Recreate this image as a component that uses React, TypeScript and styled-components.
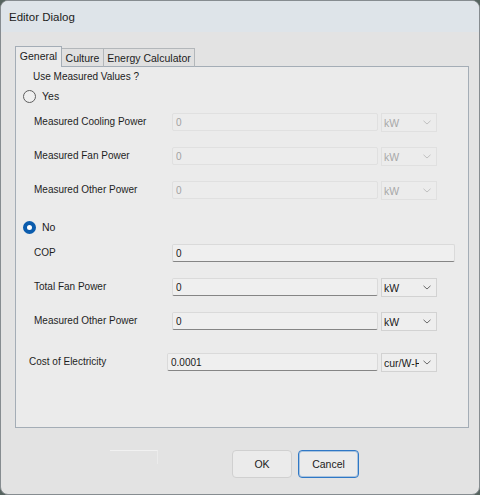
import { FC } from "react";
import styled, { createGlobalStyle } from "styled-components";

const GlobalStyle = createGlobalStyle`
  html, body {
    margin: 0;
    padding: 0;
    background: #56645f;
  }
  * {
    box-sizing: border-box;
  }
`;

const WindowStyled = styled.div`
  width: 480px;
  height: 495px;
  display: flex;
  flex-direction: column;
  border: 1px solid #868c90;
  border-radius: 8px;
  overflow: hidden;
  background: #e3e3e3;
  font-family: "Liberation Sans", Arial, sans-serif;
  color: #1c1c1c;
`;

const TitleBarStyled = styled.div`
  height: 31px;
  flex-shrink: 0;
  display: flex;
  align-items: center;
  padding-left: 8px;
  font-size: 11.5px;
  background: #dee4e9;
`;

const BodyStyled = styled.div`
  flex: 1;
  display: flex;
  flex-direction: column;
  padding: 14px 9px 0 14px;
`;

const TabStripStyled = styled.div`
  display: flex;
  align-items: flex-end;
  height: 21px;
  margin-bottom: -1px;
`;

const TabStyled = styled.div<{ $active?: boolean; $width: number }>`
  position: relative;
  z-index: ${(p) => (p.$active ? 2 : 1)};
  width: ${(p) => p.$width}px;
  height: ${(p) => (p.$active ? 21 : 19)}px;
  display: flex;
  align-items: center;
  justify-content: center;
  font-size: 10.5px;
  background: ${(p) => (p.$active ? "#ebebeb" : "#e0e0e0")};
  border: 1px solid ${(p) => (p.$active ? "#a4adb6" : "#b3b7ba")};
  border-bottom: ${(p) => (p.$active ? "none" : "1px solid #a4adb6")};
  border-left-width: ${(p) => (p.$active ? 1 : 0)}px;
  padding-bottom: ${(p) => (p.$active ? 2 : 0)}px;
`;

const PanelStyled = styled.div`
  width: 454px;
  height: 362px;
  border: 1px solid #a4adb6;
  background: #ebebeb;
  padding-top: 3px;
  display: flex;
  flex-direction: column;
`;

const GroupTitleStyled = styled.div`
  padding-left: 17px;
  height: 14px;
  line-height: 14px;
  font-size: 10px;
`;

const RadioRowStyled = styled.div<{ $gap: number }>`
  display: flex;
  align-items: center;
  gap: 6px;
  height: 14px;
  margin-top: ${(p) => p.$gap}px;
  padding-left: 7px;
  font-size: 10.5px;
`;

const RadioCircleStyled = styled.span<{ $checked?: boolean }>`
  width: 13px;
  height: 13px;
  border-radius: 50%;
  background: ${(p) => (p.$checked ? "#ffffff" : "#efefef")};
  border: ${(p) => (p.$checked ? "4px solid #0b5cad" : "1px solid #5e5e5e")};
`;

const RowStyled = styled.div<{ $gap: number; $indent: number }>`
  display: flex;
  align-items: flex-start;
  margin-top: ${(p) => p.$gap}px;
  padding-left: ${(p) => p.$indent}px;
`;

const LabelStyled = styled.div`
  width: 138px;
  height: 18px;
  line-height: 18px;
  font-size: 10px;
  color: #1e1e1e;
`;

const TextBoxStyled = styled.input<{ $width: number }>`
  width: ${(p) => p.$width}px;
  height: 18px;
  margin: 0;
  padding: 0 0 0 3px;
  font-family: "Liberation Sans", Arial, sans-serif;
  font-size: 10px;
  color: #1a1a1a;
  background: #efefef;
  border: 1px solid #dadada;
  border-bottom: 1px solid #858585;
  border-radius: 2px;
  outline: none;

  &:disabled {
    color: #a2a2a2;
    background: #ececec;
    border-color: #e0e0e0;
  }
`;

const ComboStyled = styled.div<{ $disabled?: boolean }>`
  width: 56px;
  height: 19px;
  margin-left: 3px;
  display: flex;
  align-items: center;
  padding: 0 5px 0 2px;
  font-size: 10.5px;
  color: ${(p) => (p.$disabled ? "#a8a8a8" : "#1a1a1a")};
  background: ${(p) => (p.$disabled ? "#ececec" : "#eeeeee")};
  border: 1px solid ${(p) => (p.$disabled ? "#e0e0e0" : "#d2d2d2")};
`;

const ComboTextStyled = styled.span`
  flex: 1;
  min-width: 0;
  margin-right: 4px;
  overflow: hidden;
  white-space: nowrap;
`;

const FooterStyled = styled.div`
  display: flex;
  align-items: flex-start;
  margin-top: 22px;
  height: 28px;
`;

const GhostStyled = styled.div`
  width: 48px;
  height: 14px;
  margin-left: 95px;
  border-top: 1px solid #f1f1f1;
  border-right: 1px solid #ebebeb;
`;

const ButtonStyled = styled.button<{ $default?: boolean; $width: number; $gap: number }>`
  width: ${(p) => p.$width}px;
  height: 28px;
  margin-left: ${(p) => p.$gap}px;
  padding: 0;
  font-family: "Liberation Sans", Arial, sans-serif;
  font-size: 10.5px;
  color: #1a1a1a;
  background: #ebebeb;
  border-radius: 4px;
  border: 1px solid ${(p) => (p.$default ? "#2f78c6" : "#d0d0d0")};
  box-shadow: ${(p) => (p.$default ? "inset 0 0 0 1px rgba(47,120,198,0.35)" : "none")};
`;

const Chevron: FC<{ color: string }> = ({ color }) => (
  <svg width="8" height="5" viewBox="0 0 8 5">
    <path d="M0.5 0.8 L4 4 L7.5 0.8" fill="none" stroke={color} strokeWidth="1" />
  </svg>
);

const Combo: FC<{ value: string; disabled?: boolean }> = ({ value, disabled }) => (
  <ComboStyled $disabled={disabled}>
    <ComboTextStyled>{value}</ComboTextStyled>
    <Chevron color={disabled ? "#c0c0c0" : "#6a6a6a"} />
  </ComboStyled>
);

interface FieldProps {
  label: string;
  value: string;
  gap: number;
  indent?: number;
  width?: number;
  unit?: string;
  disabled?: boolean;
}

const Field: FC<FieldProps> = ({ label, value, gap, indent = 18, width = 206, unit, disabled }) => (
  <RowStyled $gap={gap} $indent={indent}>
    <LabelStyled>{label}</LabelStyled>
    <TextBoxStyled $width={width} defaultValue={value} disabled={disabled} />
    {unit && <Combo value={unit} disabled={disabled} />}
  </RowStyled>
);

const App: FC = () => {
  return (
    <>
      <GlobalStyle />
      <WindowStyled>
        <TitleBarStyled>Editor Dialog</TitleBarStyled>
        <BodyStyled>
          <TabStripStyled>
            <TabStyled $active $width={47}>General</TabStyled>
            <TabStyled $width={42}>Culture</TabStyled>
            <TabStyled $width={91}>Energy Calculator</TabStyled>
          </TabStripStyled>
          <PanelStyled>
            <GroupTitleStyled>Use Measured Values ?</GroupTitleStyled>
            <RadioRowStyled $gap={5}>
              <RadioCircleStyled />
              Yes
            </RadioRowStyled>
            <Field label="Measured Cooling Power" value="0" gap={10} unit="kW" disabled />
            <Field label="Measured Fan Power" value="0" gap={15} unit="kW" disabled />
            <Field label="Measured Other Power" value="0" gap={15} unit="kW" disabled />
            <RadioRowStyled $gap={20}>
              <RadioCircleStyled $checked />
              No
            </RadioRowStyled>
            <Field label="COP" value="0" gap={10} width={283} />
            <Field label="Total Fan Power" value="0" gap={16} unit="kW" />
            <Field label="Measured Other Power" value="0" gap={15} unit="kW" />
            <Field label="Cost of Electricity" value="0.0001" gap={22} indent={13} width={211} unit="cur/W-H" />
          </PanelStyled>
          <FooterStyled>
            <GhostStyled />
            <ButtonStyled $width={60} $gap={74}>OK</ButtonStyled>
            <ButtonStyled $default $width={61} $gap={6}>Cancel</ButtonStyled>
          </FooterStyled>
        </BodyStyled>
      </WindowStyled>
    </>
  );
};

export default App;
